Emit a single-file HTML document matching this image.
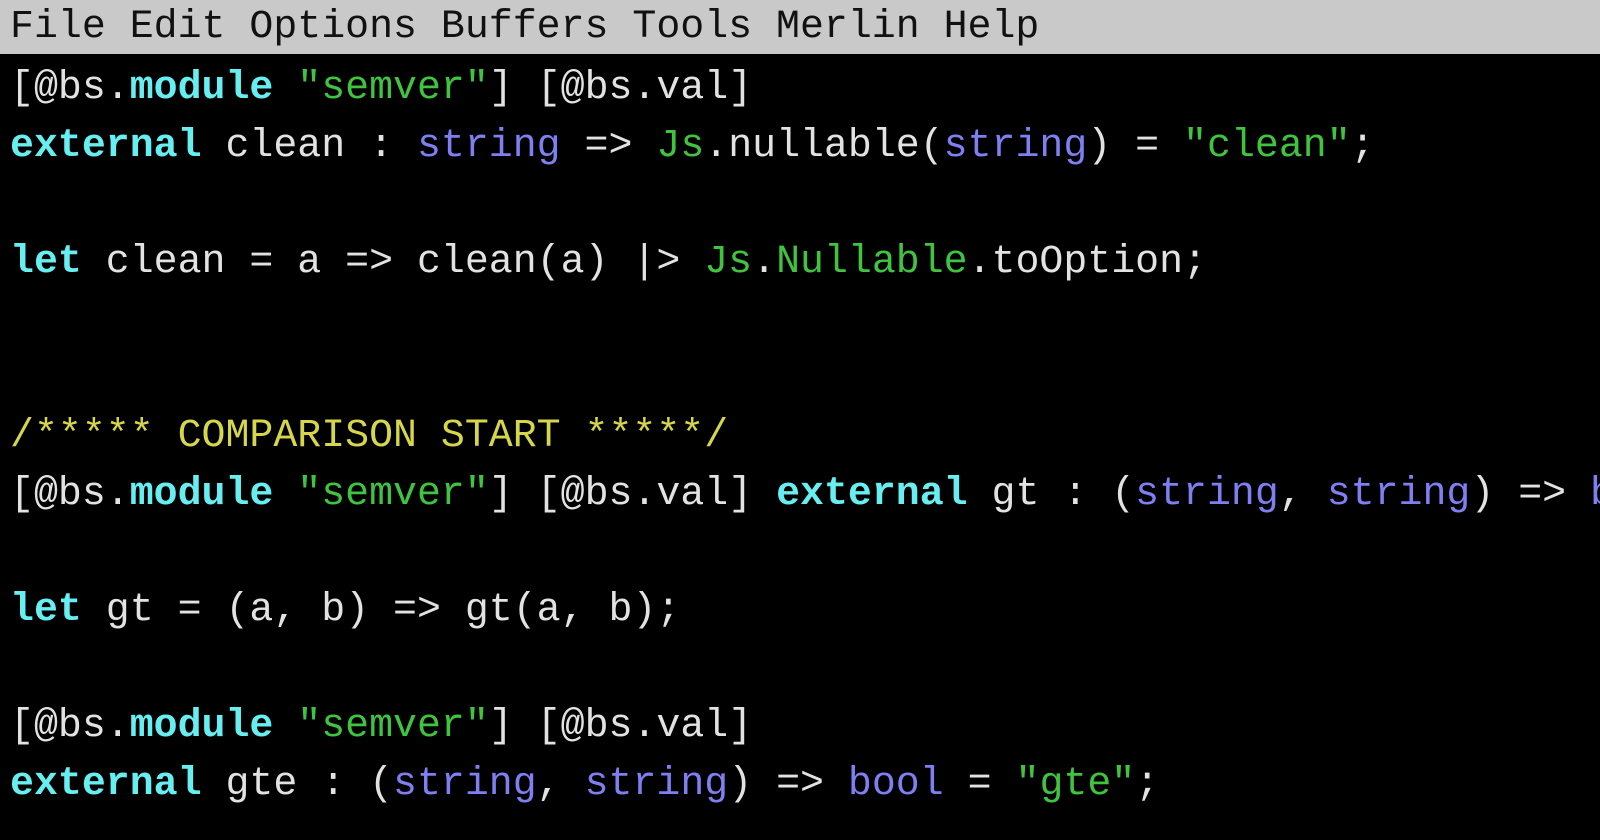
<!DOCTYPE html>
<html><head><meta charset="utf-8"><style>
html,body{margin:0;padding:0;background:#000;width:1600px;height:840px;overflow:hidden}
.menu{position:absolute;left:0;top:0;width:1600px;height:54px;background:#c9c9c9;color:#111;font:39.9px/54px "Liberation Mono",monospace;padding-left:10px;white-space:pre;box-sizing:border-box}
pre{position:absolute;left:10px;top:59px;width:1590px;overflow:hidden;margin:0;font:39.9px/58px "Liberation Mono",monospace;color:#e2e2e2;white-space:pre}
.k{color:#66eef0;font-weight:bold}
.t{color:#7f7ff2}
.s{color:#40c440}
.c{color:#d6d64c}
</style></head><body>
<div class="menu">File Edit Options Buffers Tools Merlin Help</div>
<pre>[@bs.<span class="k">module</span> <span class="s">"semver"</span>] [@bs.val]
<span class="k">external</span> clean : <span class="t">string</span> =&gt; <span class="s">Js</span>.nullable(<span class="t">string</span>) = <span class="s">"clean"</span>;

<span class="k">let</span> clean = a =&gt; clean(a) |&gt; <span class="s">Js</span>.<span class="s">Nullable</span>.toOption;


<span class="c">/***** COMPARISON START *****/</span>
[@bs.<span class="k">module</span> <span class="s">"semver"</span>] [@bs.val] <span class="k">external</span> gt : (<span class="t">string</span>, <span class="t">string</span>) =&gt; <span class="t">b</span>

<span class="k">let</span> gt = (a, b) =&gt; gt(a, b);

[@bs.<span class="k">module</span> <span class="s">"semver"</span>] [@bs.val]
<span class="k">external</span> gte : (<span class="t">string</span>, <span class="t">string</span>) =&gt; <span class="t">bool</span> = <span class="s">"gte"</span>;</pre>
</body></html>
